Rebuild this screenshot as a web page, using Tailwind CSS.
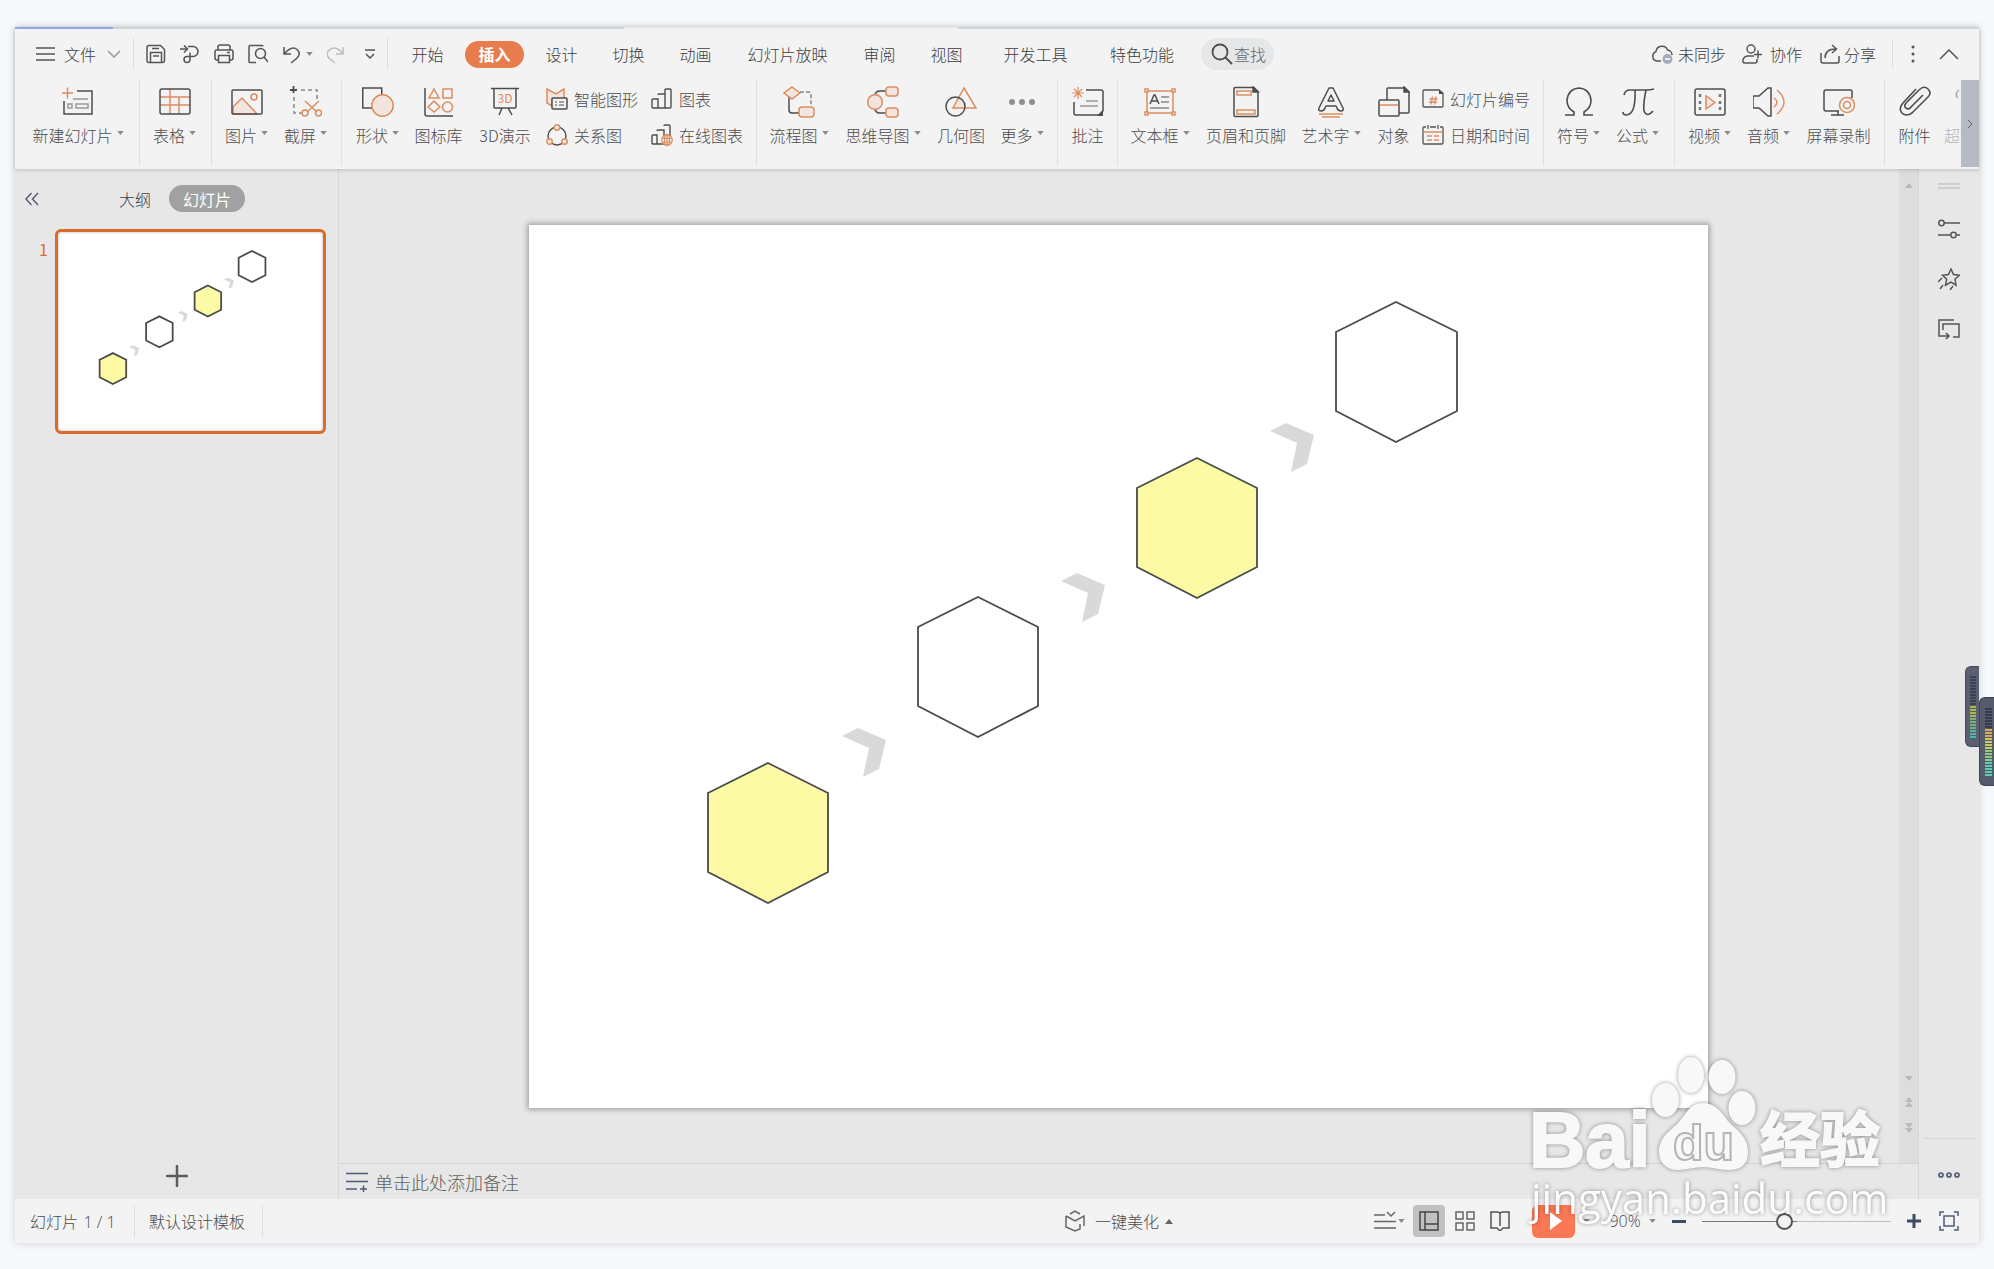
<!DOCTYPE html>
<html lang="zh-CN">
<head>
    <meta charset="UTF-8"/>
    <meta name="viewport" content="width=device-width, initial-scale=1.0"/>
    <title>演示文稿</title>
    <script src="https://cdn.jsdelivr.net/npm/@tailwindcss/browser@4"></script>
</head>
<body class="relative flex min-h-screen flex-col overflow-x-hidden bg-[#f7f8fb] px-[15px] pt-[27px] pb-[26px] font-['Noto_Sans_CJK_SC',sans-serif] text-base leading-6 font-light text-[#3c3c3c]">

<!-- 公用图形 -->
<svg class="hidden">
    <symbol id="tri" viewBox="0 0 8 5"><path d="M0 0h8L4 5z" fill="#8a8a8a"/></symbol>
    <symbol id="slide" viewBox="0 0 1179 883">
        <path d="M741 206l16-8 28 12-7 29-16 8 6-29z M532 356l16-8 28 12-7 29-16 8 6-29z M313 511l16-8 28 12-7 29-16 8 6-29z" fill="#d9d9d9"/>
        <g stroke="#4a4a4a">
            <path d="M239 538l60 30v79l-60 31-60-31v-79z" fill="#fcfaa4"/>
            <path d="M449 372l60 30v79l-60 31-60-31v-79z" fill="#fff"/>
            <path d="M668 233l60 30v79l-60 31-60-31v-79z" fill="#fcfaa4"/>
            <path d="M867 77l61 30v79l-61 31-60-31v-79z" fill="#fff"/>
        </g>
    </symbol>
</svg>

<div class="flex flex-1 flex-col bg-[#e7e7e7] shadow-[0_0_8px_rgba(0,0,0,0.16)]">

    <header class="relative z-10 bg-[#f3f3f3] shadow-[0_1px_4px_rgba(0,0,0,0.18)]">
        <div class="flex h-0.5">
            <div class="w-[5%] bg-[#8fa8ea]"></div>
            <div class="w-[26%] bg-[#ccd2da]"></div>
            <div class="w-[17%] bg-[#ececec]"></div>
            <div class="flex-1 bg-[#cfd6dd]"></div>
        </div>

        <!-- 菜单栏 -->
        <div class="flex h-[50px] items-center whitespace-nowrap">
            <button class="flex items-center pl-[21px]">
                <svg class="h-5 w-5" viewBox="0 0 20 20" fill="none" stroke="#555" stroke-width="1.5"><path d="M0 4h19M0 10h19M0 16h19"/></svg>
                <span class="ml-2">文件</span>
                <svg class="ml-[11px] h-2 w-[14px]" viewBox="0 0 14 8" fill="none" stroke="#999" stroke-width="1.5"><path d="M1 1l6 6 6-6"/></svg>
            </button>
            <div class="ml-3 h-8 w-px bg-[#dedede]"></div>
            <div class="ml-3 flex items-center gap-[14px]">
                <button aria-label="保存"><svg class="h-5 w-5" viewBox="0 0 20 20" fill="none" stroke="#555" stroke-width="1.5"><path d="M3 1.500h11.500l4 4v11q0 2-2 2H3q-2 0-2-2v-13q0-2 2-2zM6 4.500h7M4.500 18V8.500h11V18M7 12h6"/></svg></button>
                <button aria-label="输出"><svg class="h-5 w-5" viewBox="0 0 20 20" fill="none" stroke="#555" stroke-width="1.500"><path d="M0 5h7M4 1.500L7.500 5 4 8.500M8 2.500h5a5 5 0 0 1 0 10H7a3 3 0 1 0 3 3v-7"/></svg></button>
                <button aria-label="打印"><svg class="h-5 w-5" viewBox="0 0 20 20" fill="none" stroke="#555" stroke-width="1.500"><path d="M4 6V3q0-2 2-2h8q2 0 2 2v3M4 16H3q-2 0-2-2V8q0-2 2-2h14q2 0 2 2v6q0 2-2 2h-1M4.500 11.500h11v7h-11zM13 8.500h3"/></svg></button>
                <button aria-label="打印预览"><svg class="h-5 w-5" viewBox="0 0 20 20" fill="none" stroke="#555" stroke-width="1.500"><path d="M8 18.500H2q-1 0-1-1v-15q0-1 1-1h12q1 0 1 1"/><circle cx="12.500" cy="9.500" r="5"/><path d="M16 13l4 5"/></svg></button>
                <button aria-label="撤销" class="flex items-center gap-1">
                    <svg class="h-5 w-5" viewBox="0 0 20 20" fill="none" stroke="#555" stroke-width="1.500"><path d="M2 3v7h7M2 10q8-9 13-4.500t-1 9.500l-5 4"/></svg>
                    <svg class="h-1 w-[7px]"><use href="#tri"/></svg>
                </button>
                <button aria-label="恢复"><svg class="h-5 w-5" viewBox="0 0 20 20" fill="none" stroke="#bdbdbd" stroke-width="1.500"><path d="M16 3v7H9M16 10Q9 1 3 5.500t0 9.500l5 4"/></svg></button>
                <button aria-label="更多命令" class="ml-1"><svg class="h-[10px] w-[10px]" viewBox="0 0 10 10" fill="none" stroke="#555" stroke-width="1.500"><path d="M0 1h10M1 5l4 4 4-4"/></svg></button>
            </div>
            <div class="ml-3 h-8 w-px bg-[#dedede]"></div>
            <nav class="ml-1.5 flex items-center">
                <button class="w-[67px]">开始</button>
                <button class="mx-1 h-[27px] w-[59px] rounded-full bg-[#e77c4d] font-bold text-white">插入</button>
                <button class="w-[67px]">设计</button>
                <button class="w-[67px]">切换</button>
                <button class="w-[67px]">动画</button>
                <button class="w-[117px]">幻灯片放映</button>
                <button class="w-[67px]">审阅</button>
                <button class="w-[67px]">视图</button>
                <button class="w-[111px]">开发工具</button>
                <button class="w-[102px]">特色功能</button>
            </nav>
            <button class="ml-2 flex h-8 items-center gap-px rounded-full bg-[#e5e7e9] px-2 pl-[10px] text-[#666]">
                <svg class="h-[22px] w-[22px]" viewBox="0 0 22 22" fill="none" stroke="#4d4d4d" stroke-width="1.800"><circle cx="9" cy="9" r="7.500"/><path d="M14.500 14.500l6.500 6.500"/></svg>
                <span>查找</span>
            </button>
            <div class="ml-auto flex items-center">
                <button class="flex items-center gap-1">
                    <svg class="h-6 w-6" viewBox="0 0 24 24" fill="none" stroke="#555" stroke-width="1.500"><path d="M11 19H6.500A5 5 0 0 1 6 9.500 6 6 0 0 1 17.500 8 5 5 0 0 1 22 13"/><circle cx="17.500" cy="17" r="5" fill="#a5abbb" stroke="none"/><path d="M15 17h5" stroke="#fff"/></svg>
                    <span>未同步</span>
                </button>
                <button class="ml-4 flex items-center gap-2">
                    <svg class="h-5 w-5" viewBox="0 0 20 20" fill="none" stroke="#555" stroke-width="1.500"><circle cx="9" cy="5" r="4"/><path d="M15 15v2q0 2-2 2H3q-2.500 0-2-3 1-4 5-4h6M12 10.500h8M16 6.500v8"/></svg>
                    <span>协作</span>
                </button>
                <button class="ml-[18px] flex items-center gap-1">
                    <svg class="h-5 w-5" viewBox="0 0 20 20" fill="none" stroke="#555" stroke-width="1.500"><path d="M1 9v8q0 2 2 2h14q2 0 2-2v-5M5 14q0-9 11-9M12 1l4.500 4L12 9"/></svg>
                    <span>分享</span>
                </button>
                <div class="ml-4 h-7 w-px bg-[#dedede]"></div>
                <button aria-label="选项" class="ml-[18px]"><svg class="h-[18px] w-1" viewBox="0 0 4 18" fill="#555"><circle cx="2" cy="2" r="1.500"/><circle cx="2" cy="9" r="1.500"/><circle cx="2" cy="16" r="1.500"/></svg></button>
                <button aria-label="收起功能区" class="mr-5 ml-6"><svg class="h-[11px] w-5" viewBox="0 0 20 11" fill="none" stroke="#555" stroke-width="1.500"><path d="M1 10l9-9 9 9"/></svg></button>
            </div>
        </div>

        <!-- 功能区 -->
        <div class="mt-px flex h-[89px] overflow-hidden whitespace-nowrap text-[#4c4c4c]">
            <div class="flex h-[86px] shrink-0 border-r border-[#e1e1e1] pr-1.5 pl-[10px]">
                <button class="flex w-[108px] flex-col items-center gap-[5px] pt-1.5 pr-0.5">
                    <svg class="h-8 w-8" viewBox="0 0 32 32" fill="none" stroke="#4d4d4d" stroke-width="1.500"><path d="M15 5h15v23H2V15"/><path d="M11 13h15M6 18h4v4H6zM14 18h12v4H14z" stroke="#999"/><path d="M0 7h11M5.500 1.500v11" stroke="#dc8d5f"/></svg>
                    <span class="flex items-center gap-1">新建幻灯片<svg class="mb-1 h-1 w-[7px]"><use href="#tri"/></svg></span>
                </button>
            </div>
            <div class="flex h-[86px] shrink-0 border-r border-[#e1e1e1] px-1.5">
                <button class="flex w-[59px] flex-col items-center gap-[5px] pt-1.5 pr-0.5">
                    <svg class="h-8 w-8" viewBox="0 0 32 32" fill="none" stroke-width="1.500"><path d="M1 11h30M1 19h30M11 3v25M20 11v17" stroke="#dc8d5f"/><rect x="1" y="3" width="30" height="25" rx="2" stroke="#4d4d4d"/></svg>
                    <span class="flex items-center gap-1">表格<svg class="mb-1 h-1 w-[7px]"><use href="#tri"/></svg></span>
                </button>
            </div>
            <div class="flex h-[86px] shrink-0 border-r border-[#e1e1e1] pr-[5px] pl-1.5">
                <button class="flex w-[59px] flex-col items-center gap-[5px] pt-1.5 pr-0.5">
                    <svg class="h-8 w-8" viewBox="0 0 32 32" fill="none" stroke="#dc8d5f" stroke-width="1.500"><path d="M2 21l9-9 15 16H2z" fill="#f3e5de"/><circle cx="23" cy="11" r="3"/><rect x="1" y="4" width="30" height="24" rx="1" stroke="#4d4d4d"/></svg>
                    <span class="flex items-center gap-1">图片<svg class="mb-1 h-1 w-[7px]"><use href="#tri"/></svg></span>
                </button>
                <button class="flex w-[59px] flex-col items-center gap-[5px] pt-1.5 pr-0.5">
                    <svg class="h-8 w-8" viewBox="0 0 32 32" fill="none" stroke="#4d4d4d" stroke-width="1.500"><path d="M0 4h7M3.500 0v7" stroke-width="1.800"/><path d="M11 4h16v9M4 11v16h8" stroke="#888" stroke-dasharray="4 3"/><g stroke="#dc8d5f"><path d="M15 15l12 11M29 15L17 26"/><circle cx="15" cy="27" r="3"/><circle cx="28.500" cy="27" r="3"/></g></svg>
                    <span class="flex items-center gap-1">截屏<svg class="mb-1 h-1 w-[7px]"><use href="#tri"/></svg></span>
                </button>
            </div>
            <div class="flex h-[86px] shrink-0 border-r border-[#e1e1e1] px-1.5">
                <button class="flex w-[59px] flex-col items-center gap-[5px] pt-1.5">
                    <svg class="h-8 w-8" viewBox="0 0 32 32" fill="none" stroke-width="1.500"><rect x="0.750" y="2" width="19" height="20" stroke="#4d4d4d"/><circle cx="20.500" cy="19.500" r="10.700" fill="#f3e5de" stroke="#dc8d5f"/></svg>
                    <span class="flex items-center gap-1">形状<svg class="mb-1 h-1 w-[7px]"><use href="#tri"/></svg></span>
                </button>
                <button class="flex w-[63px] flex-col items-center gap-[5px] pt-1.5">
                    <svg class="h-8 w-8" viewBox="0 0 32 32" fill="none" stroke="#dc8d5f" stroke-width="1.500"><path d="M2 2v26q0 2 2 2h26" stroke="#4d4d4d"/><path d="M11 3l5 9H6zM20 3h9v9h-9zM11 15l6 6-6 5-6-5z"/><circle cx="24.500" cy="21" r="5"/></svg>
                    <span>图标库</span>
                </button>
                <button class="flex w-[70px] flex-col items-center gap-[5px] pt-1.5">
                    <svg class="h-8 w-8" viewBox="0 0 32 32" fill="none" stroke="#4d4d4d" stroke-width="1.500"><path d="M2 2.500h28M5 3v18q0 1 1 1h20q1 0 1-1V3M13 22l-3 7M19 22l4 7"/><text x="16" y="17" text-anchor="middle" font-size="12" font-weight="400" stroke="none" fill="#dc8d5f">3D</text></svg>
                    <span>3D演示</span>
                </button>
                <div class="flex w-[105px] flex-col gap-3 pt-[7px] pl-1.5">
                    <button class="flex items-center gap-1.5">
                        <svg class="h-[22px] w-[22px]" viewBox="0 0 22 22" fill="none" stroke="#4d4d4d" stroke-width="1.500"><path d="M1 1v14l5 3V11h12V1l-8 5z" fill="#f3e5de" stroke="#dc8d5f"/><rect x="6" y="10" width="15" height="11" rx="1" fill="#f3f3f3"/><path d="M9 14h2M13 14h5M9 17h2M13 17h5" stroke-width="1"/></svg>
                        <span>智能图形</span>
                    </button>
                    <button class="flex items-center gap-1.5">
                        <svg class="h-[22px] w-[22px]" viewBox="0 0 22 22" fill="#f3e5de" stroke="#4d4d4d" stroke-width="1.400"><circle cx="11" cy="12" r="9" fill="none"/><g stroke="#dc8d5f"><circle cx="11" cy="3.500" r="2.800"/><circle cx="3.500" cy="17.500" r="2.800"/><circle cx="18.500" cy="17.500" r="2.800"/></g></svg>
                        <span>关系图</span>
                    </button>
                </div>
                <div class="flex w-[105px] flex-col gap-3 pt-[7px] pl-1.5">
                    <button class="flex items-center gap-1.5">
                        <svg class="h-[22px] w-[22px]" viewBox="0 0 22 22" fill="none" stroke="#4d4d4d" stroke-width="1.400"><path d="M1 12q0-1 1-1h5v9H2q-1 0-1-1zM7 7q0-1 1-1h6v14H7M14 2q0-1 1-1h4q1 0 1 1v17q0 1-1 1h-5z"/></svg>
                        <span>图表</span>
                    </button>
                    <button class="flex items-center gap-1.5">
                        <svg class="h-[22px] w-[22px]" viewBox="0 0 22 22" fill="none" stroke="#4d4d4d" stroke-width="1.400"><path d="M1 12q0-1 1-1h4v9H2q-1 0-1-1zM6 7q0-1 1-1h6v14H6M13 2q0-1 1-1h4q1 0 1 1v12"/><g stroke="#dc8d5f" stroke-width="1.200"><circle cx="16" cy="16" r="5.300" fill="#f3f3f3"/><ellipse cx="16" cy="16" rx="2.500" ry="5.300"/><path d="M16 11v10M11 14.500h10M11 18h10"/></g></svg>
                        <span>在线图表</span>
                    </button>
                </div>
            </div>
            <div class="flex h-[86px] shrink-0 border-r border-[#e1e1e1] px-1">
                <button class="flex w-[76px] flex-col items-center gap-[5px] pt-1.5">
                    <svg class="h-8 w-8" viewBox="0 0 32 32" fill="#f3e5de" stroke="#dc8d5f" stroke-width="1.500"><path d="M6 10v14q0 3 3 3h7" fill="none" stroke="#4d4d4d"/><path d="M17 6h8q3 0 3 3v11" fill="none" stroke="#888" stroke-dasharray="4 2"/><path d="M9 1l8 6-8 6-8-6z"/><rect x="16" y="21" width="15" height="10" rx="3"/></svg>
                    <span class="flex items-center gap-1">流程图<svg class="mb-1 h-1 w-[7px]"><use href="#tri"/></svg></span>
                </button>
                <button class="flex w-[92px] flex-col items-center gap-[5px] pt-1.5">
                    <svg class="h-8 w-8" viewBox="0 0 32 32" fill="#f3e5de" stroke="#dc8d5f" stroke-width="1.500"><path d="M8 10q0-5 5-5h6M8 22q0 5 5 5h6" fill="none" stroke="#4d4d4d"/><circle cx="8" cy="16" r="7.300"/><rect x="19" y="1" width="12" height="9" rx="3"/><rect x="19" y="22" width="12" height="9" rx="3"/></svg>
                    <span class="flex items-center gap-1">思维导图<svg class="mb-1 h-1 w-[7px]"><use href="#tri"/></svg></span>
                </button>
                <button class="flex w-[64px] flex-col items-center gap-[5px] pt-1.5">
                    <svg class="h-8 w-8" viewBox="0 0 32 32" fill="none" stroke-width="1.500"><path d="M12 13q6-1 8 7v2H8z" fill="#f3e5de"/><path d="M19 2l12 20H8z" stroke="#dc8d5f"/><circle cx="10.500" cy="20.500" r="9.500" stroke="#4d4d4d"/></svg>
                    <span>几何图</span>
                </button>
                <button class="flex w-[60px] flex-col items-center gap-[5px] pt-1.5 pr-0.5">
                    <svg class="h-8 w-8" viewBox="0 0 32 32" fill="#8f8f8f"><circle cx="6" cy="16" r="3"/><circle cx="16" cy="16" r="3"/><circle cx="26" cy="16" r="3"/></svg>
                    <span class="flex items-center gap-1">更多<svg class="mb-1 h-1 w-[7px]"><use href="#tri"/></svg></span>
                </button>
            </div>
            <div class="flex h-[86px] shrink-0 border-r border-[#e1e1e1] px-1.5">
                <button class="flex w-[47px] flex-col items-center gap-[5px] pt-1.5">
                    <svg class="h-8 w-8" viewBox="0 0 32 32" fill="none" stroke="#4d4d4d" stroke-width="1.500"><path d="M14 4h15q2 0 2 2v19l-4 4H4q-2 0-2-2V16"/><path d="M31 24v6h-6z" fill="#4d4d4d" stroke="none"/><path d="M14 15h12M8 20h18" stroke="#999"/><path d="M0 7h12M6 1v12M2 3l8 8M10 3l-8 8" stroke="#dc8d5f" stroke-width="1.200"/></svg>
                    <span>批注</span>
                </button>
            </div>
            <div class="flex h-[86px] shrink-0 border-r border-[#e1e1e1] pr-2 pl-1">
                <button class="flex w-[76px] flex-col items-center gap-[5px] pt-1.5">
                    <svg class="h-8 w-8" viewBox="0 0 32 32" fill="none" stroke="#dc8d5f" stroke-width="1.500"><rect x="3" y="5" width="26" height="22"/><g fill="#f3f3f3"><path d="M1 3h3v3H1zM28 3h3v3h-3zM1 26h3v3H1zM28 26h3v3h-3z"/></g><path d="M17 11h8M17 16h8M6 22h19" stroke="#888"/><path d="M6 18l4-9h1l4 9M8 15h5" stroke="#4d4d4d"/></svg>
                    <span class="flex items-center gap-1">文本框<svg class="mb-1 h-1 w-[7px]"><use href="#tri"/></svg></span>
                </button>
                <button class="flex w-[96px] flex-col items-center gap-[5px] pt-1.5">
                    <svg class="h-8 w-8" viewBox="0 0 32 32" fill="none" stroke="#4d4d4d" stroke-width="1.500"><path d="M5 1.500h19l4 4v24q0 1-1 1H5q-1 0-1-1v-27q0-1 1-1z"/><path d="M23 1l5 5h-5z" fill="#4d4d4d"/><path d="M7 5h14v4H7zM7 24h18v4H7z" stroke="#dc8d5f"/></svg>
                    <span>页眉和页脚</span>
                </button>
                <button class="flex w-[76px] flex-col items-center gap-[5px] pt-1.5 pr-0.5">
                    <svg class="h-8 w-8" viewBox="0 0 32 32" fill="none" stroke="#4d4d4d" stroke-width="1.500" stroke-linejoin="round"><path d="M14 2h4l10 20q1 3-2 3t-4-3l-1-2H11l-1 2q-1 3-4 3t-2-3zM16 9l3 6h-6z"/><path d="M4 28h24M7 31h18" stroke="#dc8d5f"/></svg>
                    <span class="flex items-center gap-1">艺术字<svg class="mb-1 h-1 w-[7px]"><use href="#tri"/></svg></span>
                </button>
                <button class="flex w-[47px] flex-col items-center gap-[5px] pt-1.5">
                    <svg class="h-8 w-8" viewBox="0 0 32 32" fill="none" stroke="#4d4d4d" stroke-width="1.500"><path d="M9 14V3q0-1 1-1h17l4 4v20q0 1-1 1h-9"/><path d="M26 1l5 5h-5z" fill="#4d4d4d"/><rect x="1" y="14" width="20" height="16" rx="1"/><path d="M2 19h18" stroke="#dc8d5f"/></svg>
                    <span>对象</span>
                </button>
                <div class="flex w-[118px] flex-col gap-3 pt-[7px] pl-[5px]">
                    <button class="flex items-center gap-1.5">
                        <svg class="h-[22px] w-[22px]" viewBox="0 0 22 22" fill="none" stroke="#555" stroke-width="1.300"><path d="M2 2h15l4 3v13q0 1-1 1H2q-1 0-1-1V3q0-1 1-1z"/><path d="M17 2l4 4h-4z" fill="#444" stroke="none"/><path d="M7.500 11h8M7 14h8M10.500 8.500l-1.500 8M14 8.500l-1.500 8" stroke="#dc8d5f"/></svg>
                        <span>幻灯片编号</span>
                    </button>
                    <button class="flex items-center gap-1.5">
                        <svg class="h-[22px] w-[22px]" viewBox="0 0 22 22" fill="none" stroke="#555" stroke-width="1.300"><path d="M4 3H2Q1 3 1 4v15q0 1 1 1h18q1 0 1-1V4q0-1-1-1h-2M6 1v4M16 1v4M8 3h6"/><path d="M1 8h20M5 12h5M12 12h5M5 16h5M12 16h5" stroke="#dc8d5f"/></svg>
                        <span>日期和时间</span>
                    </button>
                </div>
            </div>
            <div class="flex h-[86px] shrink-0 border-r border-[#e1e1e1] px-1.5">
                <button class="flex w-[59px] flex-col items-center gap-[5px] pt-1.5 pr-0.5">
                    <svg class="h-8 w-8" viewBox="0 0 32 32" fill="none" stroke="#4d4d4d" stroke-width="1.600"><path d="M2 29h9v-3Q4 22 4 14.500 5 3 16 2q11 1 12 12.500Q28 22 21 26v3h9"/></svg>
                    <span class="flex items-center gap-1">符号<svg class="mb-1 h-1 w-[7px]"><use href="#tri"/></svg></span>
                </button>
                <button class="flex w-[59px] flex-col items-center gap-[5px] pt-1.5 pr-0.5">
                    <svg class="h-8 w-8" viewBox="0 0 32 32" fill="none" stroke="#4d4d4d" stroke-width="1.600"><path d="M2 9q1-5 6-5h16q5 0 8-1M13 4q1 25-9 25-3 0-3-3M24 4q-3 15-2 21 3 7 9 0"/></svg>
                    <span class="flex items-center gap-1">公式<svg class="mb-1 h-1 w-[7px]"><use href="#tri"/></svg></span>
                </button>
            </div>
            <div class="flex h-[86px] shrink-0 border-r border-[#e1e1e1] px-1.5">
                <button class="flex w-[59px] flex-col items-center gap-[5px] pt-1.5 pr-0.5">
                    <svg class="h-8 w-8" viewBox="0 0 32 32" fill="none" stroke="#4d4d4d" stroke-width="1.500"><rect x="1" y="3" width="30" height="26" rx="2"/><path d="M6 8v3M6 15v3M6 21v3M26 8v3M26 15v3M26 21v3" stroke="#777" stroke-width="2.500"/><path d="M12 10v13l9-6.500z" fill="#f3e5de" stroke="#dc8d5f"/></svg>
                    <span class="flex items-center gap-1">视频<svg class="mb-1 h-1 w-[7px]"><use href="#tri"/></svg></span>
                </button>
                <button class="flex w-[59px] flex-col items-center gap-[5px] pt-1.5 pr-0.5">
                    <svg class="h-8 w-8" viewBox="0 0 32 32" fill="none" stroke="#4d4d4d" stroke-width="1.500"><path d="M0 11q0-1 1-1h5l9-8h3v28h-3l-9-8H1q-1 0-1-1z"/><path d="M21 12q6 4 0 9M24 4q14 12 0 24" stroke="#dc8d5f"/></svg>
                    <span class="flex items-center gap-1">音频<svg class="mb-1 h-1 w-[7px]"><use href="#tri"/></svg></span>
                </button>
                <button class="flex w-[79px] flex-col items-center gap-[5px] pt-1.5">
                    <svg class="h-8 w-8" viewBox="0 0 32 32" fill="none" stroke="#4d4d4d" stroke-width="1.500"><path d="M16 25H3q-2 0-2-2V6q0-2 2-2h24q2 0 2 2v6M8 29h13M15 25v4"/><g stroke="#dc8d5f"><circle cx="24" cy="19" r="7.500" fill="#f3f3f3"/><circle cx="24" cy="19" r="3.500"/></g></svg>
                    <span>屏幕录制</span>
                </button>
            </div>
            <div class="flex h-[86px] min-w-0 flex-1 overflow-hidden pl-1.5">
                <button class="flex w-[47px] shrink-0 flex-col items-center gap-[5px] pt-1.5">
                    <svg class="h-8 w-8" viewBox="0 0 32 32" fill="none" stroke="#4d4d4d" stroke-width="1.600"><path d="M17 3L4 17q-5 6-1 10t10 0l16-16q4-4 0-8t-9 1L8 16q-4 4-1 6t5-1l12-12"/></svg>
                    <span>附件</span>
                </button>
                <button class="flex shrink-0 flex-col items-center gap-[5px] pt-1.5 pl-1.5 text-[#b4b4b4]">
                    <svg class="h-8 w-8" viewBox="0 0 32 32" fill="none" stroke="#aaa" stroke-width="1.500"><path d="M7 4q-5 4-1 8M10 24h14a7 7 0 0 0 0-14"/></svg>
                    <span>超链接</span>
                </button>
            </div>
            <button aria-label="更多功能" class="flex h-[87px] w-[18px] shrink-0 items-center justify-center bg-[#b6bac4]">
                <svg class="h-2 w-1" viewBox="0 0 4 8" fill="none" stroke="#666"><path d="M0 0l4 4-4 4"/></svg>
            </button>
        </div>
    </header>

    <main class="flex flex-1">
        <!-- 缩略图 -->
        <aside class="flex w-[324px] shrink-0 flex-col border-r border-[#d6d6d6] pt-4">
            <div class="flex h-[27px] items-center pl-[10px]">
                <button aria-label="收起面板"><svg class="h-[14px] w-[14px]" viewBox="0 0 14 14" fill="none" stroke="#56607a" stroke-width="1.500"><path d="M6.500 1L1 7l5.500 6M13 1L7.500 7l5.500 6"/></svg></button>
                <button class="ml-20 w-8">大纲</button>
                <button class="ml-[18px] h-[27px] w-[76px] rounded-full bg-[#a1a1a1] font-normal text-white">幻灯片</button>
            </div>
            <div class="mt-[17px] flex pl-6 text-[#dd6b2c]">
                <span class="mt-2 w-4 text-base font-normal">1</span>
                <a href="#slide-1" aria-label="幻灯片 1" class="mr-3 flex-1 rounded-md border-3 border-[#d96b2d] bg-white p-0.5 shadow-[inset_0_0_3px_rgba(0,0,0,0.3)]">
                    <svg class="block aspect-[1179/883] w-full" stroke-width="8" viewBox="0 0 1179 883"><use href="#slide"/></svg>
                </a>
            </div>
            <button aria-label="新建幻灯片" class="mx-auto mt-auto mb-3"><svg class="h-[22px] w-[22px]" viewBox="0 0 22 22" stroke="#5c5c5c" stroke-width="2.500" stroke-linecap="round"><path d="M1 11h20M11 1v20"/></svg></button>
        </aside>

        <section class="flex min-w-0 flex-1 flex-col">
            <div class="flex flex-1">
                <div class="flex flex-1 items-center pr-[191px] pl-[190px]">
                    <svg id="slide-1" class="block aspect-[1179/883] w-full bg-white shadow-[0_0_5px_2px_rgba(0,0,0,0.28)]" stroke-width="1.800" viewBox="0 0 1179 883"><use href="#slide"/></svg>
                </div>
                <!-- 滚动条 -->
                <div class="flex w-[19px] flex-col items-center bg-[#dddddd] pt-[14px]">
                    <svg class="h-[5px] w-2" viewBox="0 0 8 5" fill="#b9b9b9"><path d="M0 5h8L4 0z"/></svg>
                    <div class="mt-auto flex flex-col items-center gap-4 pb-[30px]">
                        <svg class="h-[5px] w-2" viewBox="0 0 8 5" fill="#b9b9b9"><path d="M0 0h8L4 5z"/></svg>
                        <svg class="h-[10px] w-2" viewBox="0 0 8 10" fill="#b9b9b9"><path d="M0 5h8L4 0zM0 10h8L4 5z"/></svg>
                        <svg class="h-[10px] w-2" viewBox="0 0 8 10" fill="#b9b9b9"><path d="M0 0h8L4 5zM0 5h8l-4 5z"/></svg>
                    </div>
                </div>
            </div>
            <label class="flex h-9 items-center gap-[7px] border-t border-[#d3d3d3] pl-[7px]">
                <svg class="h-5 w-[22px]" viewBox="0 0 22 20" fill="none" stroke="#4f5b75" stroke-width="1.500"><path d="M0 1.500h22M0 9.500h22M0 17h11M14 17h7M17.500 13.500v7"/></svg>
                <input type="text" aria-label="备注" placeholder="单击此处添加备注" class="flex-1 bg-transparent text-lg outline-none placeholder:text-[#606060]"/>
            </label>
        </section>

        <!-- 任务窗格 -->
        <aside class="flex w-[61px] shrink-0 flex-col items-center border-l border-[#d6d6d6] pt-[14px]">
            <svg class="h-[7px] w-[22px]" viewBox="0 0 22 7" stroke="#c6c6c6" stroke-width="1.500"><path d="M0 1h22M0 5h22"/></svg>
            <button aria-label="属性" class="mt-7"><svg class="h-[22px] w-[22px]" viewBox="0 0 22 22" fill="none" stroke="#555" stroke-width="1.500"><path d="M6 5h16M0 17h12M18.500 17H22"/><circle cx="3.500" cy="5" r="2.700"/><circle cx="15.500" cy="17" r="2.700"/></svg></button>
            <button aria-label="动画" class="mt-7"><svg class="h-[22px] w-[22px]" viewBox="0 0 22 22" fill="none" stroke="#555" stroke-width="1.500"><path d="M13 1l2.500 5.500 6 .7-4.500 4 1 6-5-3-5.500 3 1.200-6-4.200-4 6-.7zM4 10l-4 4M5 17l-3 4M15 18l-3 4"/></svg></button>
            <button aria-label="切换" class="mt-7"><svg class="h-[22px] w-[22px]" viewBox="0 0 22 22" fill="none" stroke="#555" stroke-width="1.500"><path d="M16 2H1v16h10M8 15l3 3-3 3M5 12V6h16v13h-6"/></svg></button>
            <div class="mt-auto h-px w-[53px] bg-[#d6d6d6]"></div>
            <button aria-label="更多" class="mt-8 mb-5"><svg class="h-2 w-[22px]" viewBox="0 0 22 8" fill="none" stroke="#4f5b75" stroke-width="1.700"><circle cx="3" cy="4" r="2"/><circle cx="11" cy="4" r="2"/><circle cx="19" cy="4" r="2"/></svg></button>
        </aside>
    </main>

    <!-- 状态栏 -->
    <footer class="flex h-11 items-center bg-[#f3f3f3] whitespace-nowrap text-[#4c4c4c]">
        <div class="w-[120px] border-r border-[#dedede] py-1 pl-[15px]">幻灯片 <span class="ml-0.5 font-['Open_Sans',sans-serif]">1 / 1</span></div>
        <div class="w-[128px] border-r border-[#dedede] py-1 pl-[14px]">默认设计模板</div>
        <div class="flex flex-1 justify-end pr-[201px]">
            <button class="flex items-center">
                <svg class="h-[22px] w-5" viewBox="0 0 20 22" fill="none" stroke="#666" stroke-width="1.500"><path d="M5 4l5-3 5 3M1 6v11l9 4 5-2v-5M1 6l9 5 9-5v10"/></svg>
                <span class="mr-1.5 ml-[10px]">一键美化</span>
                <svg class="h-[5px] w-2" viewBox="0 0 8 5" fill="#666"><path d="M0 5h8L4 0z"/></svg>
            </button>
        </div>
        <button aria-label="备注" class="flex items-center gap-0.5">
            <svg class="h-[22px] w-[22px]" viewBox="0 0 22 22" fill="none" stroke="#666" stroke-width="1.500"><path d="M0 5h11M13 2l4 4 4-4M0 11.500h22M0 18h22"/></svg>
            <svg class="h-1 w-[7px]"><use href="#tri"/></svg>
        </button>
        <button aria-label="普通视图" class="ml-2 flex h-8 w-8 items-center justify-center rounded bg-[#c1c1c1]">
            <svg class="h-5 w-5" viewBox="0 0 20 20" fill="none" stroke="#444" stroke-width="1.500"><path d="M1 1h18v18H1zM6 1v18M6 13h13"/></svg>
        </button>
        <button aria-label="幻灯片浏览" class="ml-[10px]"><svg class="h-5 w-5" viewBox="0 0 20 20" fill="none" stroke="#666" stroke-width="1.500"><path d="M1 1h7v7H1zM12 1h7v7h-7zM1 12h7v7H1zM12 12h7v7h-7z"/></svg></button>
        <button aria-label="阅读视图" class="ml-[15px]"><svg class="h-5 w-5" viewBox="0 0 20 20" fill="none" stroke="#555" stroke-width="1.500"><path d="M1 1h6q3 0 3 2 0-2 3-2h6v16h-6l-3 3-3-3H1zM10 3v12"/></svg></button>
        <button aria-label="放映" class="ml-[22px] flex h-[33px] w-[43px] items-center justify-center rounded-md bg-[#fb7856]">
            <svg class="ml-1 h-[18px] w-3" viewBox="0 0 12 18" fill="#fff"><path d="M0 0v18l12-9z"/></svg>
        </button>
        <button aria-label="放映选项" class="ml-2"><svg class="h-1 w-[7px]"><use href="#tri"/></svg></button>
        <button class="ml-[18px] flex items-center gap-[7px]"><span class="w-[34px] font-['Open_Sans','Noto_Sans_CJK_SC',sans-serif]">90%</span><svg class="h-1 w-[7px]"><use href="#tri"/></svg></button>
        <button aria-label="缩小" class="ml-4 h-[3px] w-[14px] bg-[#3f4a66]"></button>
        <input type="range" aria-label="缩放" value="43" class="mr-4 ml-4 h-5 w-[189px] appearance-none bg-transparent [&::-webkit-slider-runnable-track]:h-px [&::-webkit-slider-runnable-track]:bg-linear-to-r [&::-webkit-slider-runnable-track]:from-[#777] [&::-webkit-slider-runnable-track]:from-50% [&::-webkit-slider-runnable-track]:to-[#c0c0c0] [&::-webkit-slider-runnable-track]:to-50% [&::-webkit-slider-thumb]:-mt-2 [&::-webkit-slider-thumb]:h-[17px] [&::-webkit-slider-thumb]:w-[17px] [&::-webkit-slider-thumb]:appearance-none [&::-webkit-slider-thumb]:rounded-full [&::-webkit-slider-thumb]:border-2 [&::-webkit-slider-thumb]:border-[#555] [&::-webkit-slider-thumb]:bg-[#f3f3f3]"/>
        <button aria-label="放大"><svg class="h-[14px] w-[14px]" viewBox="0 0 14 14" stroke="#3f4a66" stroke-width="3"><path d="M0 7h14M7 0v14"/></svg></button>
        <button aria-label="适应窗口" class="mr-5 ml-[18px]"><svg class="h-5 w-5" viewBox="0 0 20 20" fill="none" stroke="#4f5b75" stroke-width="1.500"><path d="M1 5V1h4M15 1h4v4M19 15v4h-4M5 19H1v-4M5 5h10v10H5z"/></svg></button>
    </footer>
</div>

<!-- 悬浮音量条 -->
<div class="absolute top-[666px] right-[15px] z-20 h-[81px] w-[14px] rounded-l-md border border-r-0 border-[#444a59] bg-[#5a6072]">
    <svg class="ml-1 h-20 w-[6px]" viewBox="0 0 6 80" fill="none" stroke-width="6"><path d="M3 9v30" stroke="#3b404e" stroke-dasharray="2 1"/><path d="M3 39v12" stroke="#a9b54e" stroke-dasharray="2 1"/><path d="M3 51v12" stroke="#78b07a" stroke-dasharray="2 1"/><path d="M3 63v9" stroke="#4db6a5" stroke-dasharray="2 1"/></svg>
</div>
<div class="absolute top-[697px] right-0 z-20 h-[89px] w-[15px] rounded-l-md border border-r-0 border-[#3d4252] bg-[#555b6c]">
    <svg class="ml-[5px] h-[87px] w-[7px]" viewBox="0 0 7 87" fill="none" stroke-width="7"><path d="M3.500 10v20" stroke="#363b48" stroke-dasharray="2 1"/><path d="M3.500 31v9" stroke="#dcae4e" stroke-dasharray="2 1"/><path d="M3.500 40v12" stroke="#c6cd58" stroke-dasharray="2 1"/><path d="M3.500 52v12" stroke="#8fca76" stroke-dasharray="2 1"/><path d="M3.500 64v14" stroke="#56cfae" stroke-dasharray="2 1"/></svg>
</div>

<!-- 水印 -->
<svg class="pointer-events-none absolute right-[104px] bottom-[24px] z-20 h-[195px] w-[365px] drop-shadow-[0_0_2px_rgba(0,0,0,0.4)]" viewBox="0 0 365 195" fill="#f8f8f8" font-family="'Liberation Sans', sans-serif" font-weight="700">
    <text x="4" y="117" font-size="78" stroke="#f8f8f8" stroke-width="2">Bai</text>
    <ellipse cx="140.500" cy="50" rx="13.500" ry="17"/>
    <ellipse cx="166" cy="25" rx="13" ry="18"/>
    <ellipse cx="197" cy="27" rx="13.500" ry="17"/>
    <ellipse cx="217" cy="58" rx="13.500" ry="17"/>
    <path d="M178 53c14 0 20 12 26 19s19 14 19 30c0 14-9 18-20 18-9 0-16-3-25-3s-16 3-25 3c-10 0-19-6-19-18 0-16 13-22 20-30s11-19 24-19z"/>
    <text x="148" y="110" font-size="50" stroke="#b4b4b4" stroke-width="2">du</text>
    <text x="235" y="112" font-size="60" font-weight="700" stroke="#f8f8f8" stroke-width="2" font-family="'Noto Sans CJK SC', sans-serif">经验</text>
    <text x="6" y="164" font-size="42" font-weight="400" fill="#fcfcfc" font-family="'Open Sans', sans-serif">jingyan.baidu.com</text>
</svg>

</body>
</html>
